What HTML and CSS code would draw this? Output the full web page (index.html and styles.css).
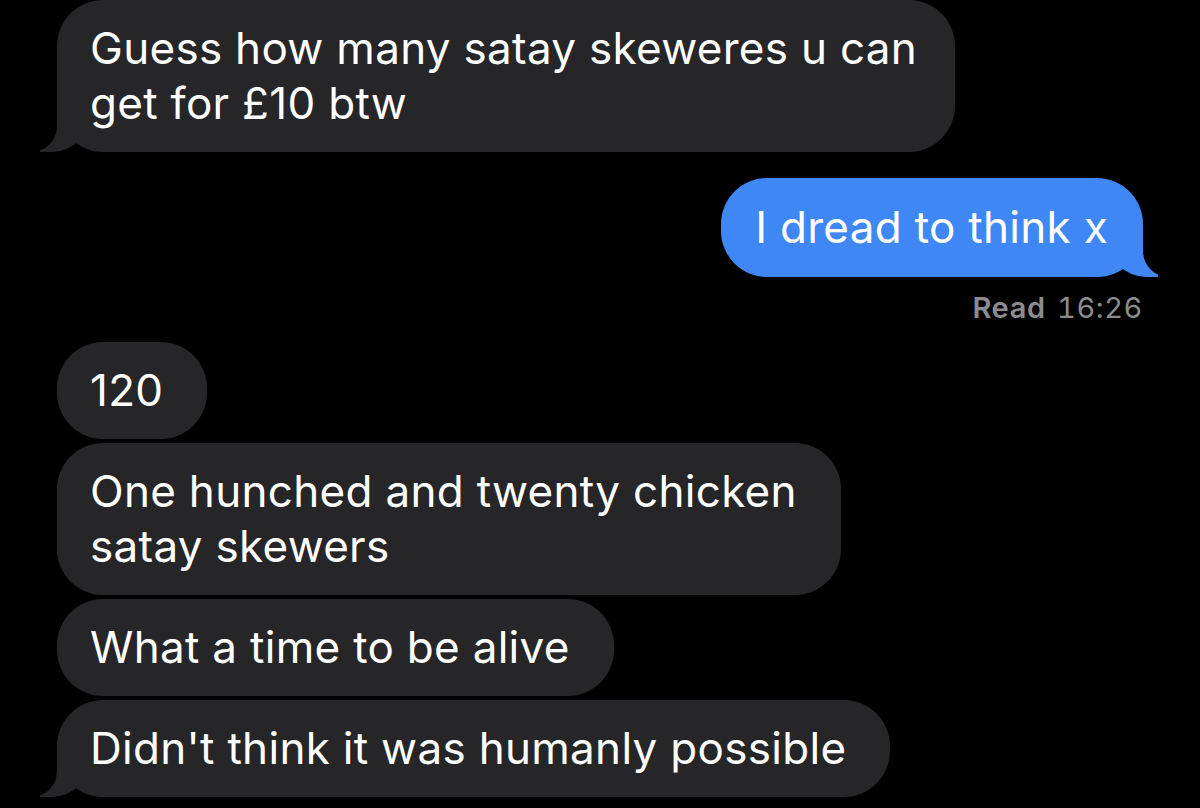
FILE: index.html
```html
<!DOCTYPE html>
<html lang="en">
<head>
<meta charset="utf-8">
<title>Messages</title>
<link rel="stylesheet" href="styles.css">
</head>
<body>
  <main class="thread">
    <div class="msg them tail first">Guess how many satay skeweres u can<br>get for £10 btw</div>
    <div class="msg me tail">I dread to think x</div>
    <div class="receipt"><b>Read</b> 16:26</div>
    <div class="group">
      <div class="msg them">120</div>
      <div class="msg them">One hunched and twenty chicken<br>satay skewers</div>
      <div class="msg them">What a time to be alive</div>
      <div class="msg them tail">Didn't think it was humanly possible</div>
    </div>
  </main>
</body>
</html>
```

FILE: styles.css
```css
html, body {
  margin: 0;
  padding: 0;
  background: #000;
  height: 808px;
  overflow: hidden;
}

.thread {
  display: flex;
  flex-direction: column;
  align-items: flex-start;
  padding: 0 57px;
  font-family: Inter, "Noto Sans", sans-serif;
  color: #fff;
}

.msg {
  position: relative;
  font-size: 44px;
  line-height: 55px;
  letter-spacing: 0.3px;
  padding: 21px 44px 21px 33px;
  border-radius: 46px;
  white-space: nowrap;
}

.them {
  background: #262628;
}

.first {
  padding-right: 38px;
}

.me {
  background: #3f87f5;
  align-self: flex-end;
  padding: 22px 35px 22px 34px;
  margin-top: 26px;
}

.them.tail::before,
.them.tail::after,
.me.tail::before,
.me.tail::after {
  content: "";
  position: absolute;
  bottom: 0;
  height: 50px;
}

.them.tail::before {
  left: -17px;
  width: 50px;
  background: #262628;
  border-bottom-right-radius: 38px;
}

.them.tail::after {
  left: -66px;
  width: 66px;
  background: #000;
  border-bottom-right-radius: 26px;
}

.me.tail::before {
  right: -15px;
  width: 50px;
  background: #3f87f5;
  border-bottom-left-radius: 38px;
}

.me.tail::after {
  right: -66px;
  width: 66px;
  background: #000;
  border-bottom-left-radius: 26px;
}

.receipt {
  align-self: flex-end;
  margin-top: 14px;
  font-size: 29px;
  line-height: 34px;
  letter-spacing: 0.6px;
  word-spacing: 3px;
  font-variant-numeric: tabular-nums;
  color: #8c8c90;
}

.receipt b {
  font-weight: 600;
}

.group {
  display: flex;
  flex-direction: column;
  align-items: flex-start;
  gap: 4px;
  margin-top: 17px;
}
```
